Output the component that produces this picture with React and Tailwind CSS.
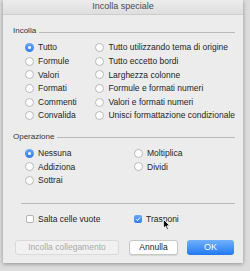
import React from 'react';

const font = { fontFamily: '"Liberation Sans", Arial, sans-serif' };

const Radio = ({ label, checked }) => (
  <div className="flex items-center h-[13.6px]">
    {checked ? (
      <span className="w-[9px] h-[9px] rounded-full bg-gradient-to-b from-[#6aa8f7] to-[#2f7cf0] flex items-center justify-center shrink-0">
        <span className="w-[3px] h-[3px] rounded-full bg-white"></span>
      </span>
    ) : (
      <span className="w-[9px] h-[9px] rounded-full bg-white border border-[#b8b8b8] shrink-0"></span>
    )}
    <span className="ml-[4px] text-[8.5px] text-[#1e1e1e] whitespace-nowrap">{label}</span>
  </div>
);

const Checkbox = ({ label, checked }) => (
  <div className="flex items-center h-[12px]">
    {checked ? (
      <span className="w-[8px] h-[8px] rounded-[2px] bg-gradient-to-b from-[#6aa8f7] to-[#2f7cf0] flex items-center justify-center shrink-0">
        <svg width="6" height="6" viewBox="0 0 6 6">
          <path d="M1 3.2 L2.4 4.6 L5 1.4" stroke="white" strokeWidth="1" fill="none" />
        </svg>
      </span>
    ) : (
      <span className="w-[8px] h-[8px] rounded-[2px] bg-white border border-[#b3b3b3] shrink-0"></span>
    )}
    <span className="ml-[4px] text-[8.5px] text-[#1e1e1e] whitespace-nowrap">{label}</span>
  </div>
);

const SectionHeader = ({ label }) => (
  <div className="flex items-center h-[12px] gap-[3px]">
    <span className="text-[8px] text-[#333]">{label}</span>
    <span className="flex-1 h-px bg-[#b9b9b9] mt-[2px]"></span>
  </div>
);

export default function App() {
  return (
    <div className="w-[250px] h-[271px] bg-[#dcdcdc] overflow-hidden relative" style={font}>
      <div className="ml-[3px] w-[240px] h-[263px] bg-[#ececec] flex flex-col shadow-[0_1px_4px_rgba(0,0,0,0.35)]">
        <div className="h-[15px] bg-gradient-to-b from-[#ececec] to-[#dedede] border-b border-[#cdcdcd] flex items-center justify-center">
          <span className="text-[9px] text-[#4a4a4a]">Incolla speciale</span>
        </div>

        <div className="pl-[10px] pr-[8px] pt-[10px]">
          <SectionHeader label="Incolla" />
          <div className="flex mt-[4px] pl-[12px]">
            <div className="w-[72px] flex flex-col">
              <Radio label="Tutto" checked />
              <Radio label="Formule" />
              <Radio label="Valori" />
              <Radio label="Formati" />
              <Radio label="Commenti" />
              <Radio label="Convalida" />
            </div>
            <div className="flex flex-col">
              <Radio label="Tutto utilizzando tema di origine" />
              <Radio label="Tutto eccetto bordi" />
              <Radio label="Larghezza colonne" />
              <Radio label="Formule e formati numeri" />
              <Radio label="Valori e formati numeri" />
              <Radio label="Unisci formattazione condizionale" />
            </div>
          </div>

          <div className="mt-[8px]">
            <SectionHeader label="Operazione" />
          </div>
          <div className="flex mt-[4px] pl-[12px]">
            <div className="w-[109px] flex flex-col">
              <Radio label="Nessuna" checked />
              <Radio label="Addiziona" />
              <Radio label="Sottrai" />
            </div>
            <div className="flex flex-col">
              <Radio label="Moltiplica" />
              <Radio label="Dividi" />
            </div>
          </div>

          <div className="mt-[16px] ml-[8px] h-px bg-[#b9b9b9]"></div>

          <div className="flex mt-[9px] pl-[13px]">
            <div className="w-[108px]">
              <Checkbox label="Salta celle vuote" />
            </div>
            <Checkbox label="Trasponi" checked />
          </div>

          <div className="flex items-center mt-[15px] pl-[2px]">
            <div className="w-[104px] h-[15px] rounded-[3px] bg-[#f1f1f1] border border-[#dadada] flex items-center justify-center text-[8.5px] text-[#a9a9a9]">
              Incolla collegamento
            </div>
            <div className="ml-[10px] w-[49px] h-[15px] rounded-[3px] bg-white border border-[#c6c6c6] shadow-[0_1px_0_rgba(0,0,0,0.08)] flex items-center justify-center text-[8.5px] text-[#1e1e1e]">
              Annulla
            </div>
            <div className="ml-[9px] w-[47px] h-[15px] rounded-[3px] bg-gradient-to-b from-[#6fb0fb] to-[#1f78f2] flex items-center justify-center text-[9px] text-white">
              OK
            </div>
          </div>
        </div>
      </div>

      <svg className="absolute left-[163px] top-[219px]" width="8" height="12" viewBox="0 0 8 12">
        <path d="M0.5 0.5 L0.5 9 L2.6 7.2 L4 10.6 L5.4 10 L4 6.8 L6.8 6.8 Z" fill="black" stroke="white" strokeWidth="0.8" />
      </svg>
    </div>
  );
}
